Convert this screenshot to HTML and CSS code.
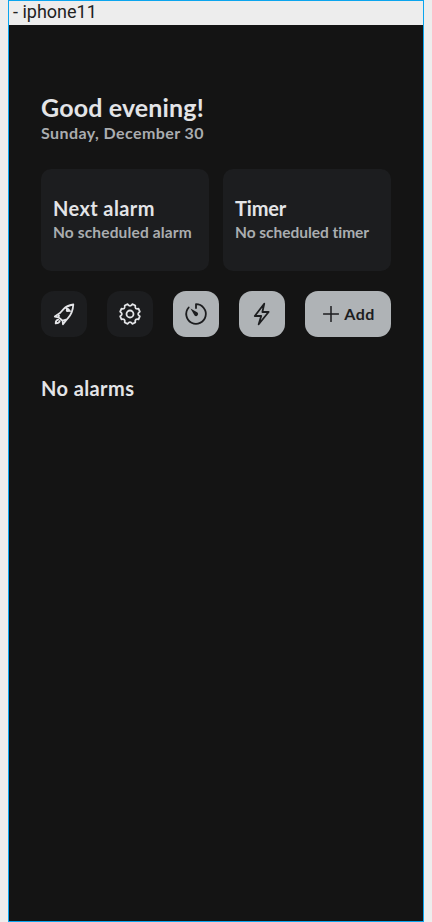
FILE: index.html
```html
<!DOCTYPE html>
<html lang="en">
<head>
<meta charset="utf-8">
<title>Alarms</title>
<link rel="stylesheet" href="styles.css">
</head>
<body>
<div class="frame">
  <div class="frame-label">- iphone11</div>
  <main class="screen">
    <header class="greeting">
      <h1>Good evening!</h1>
      <p>Sunday, December 30</p>
    </header>
    <section class="cards">
      <article class="card"><h2>Next alarm</h2><p>No scheduled alarm</p></article>
      <article class="card timer"><h2>Timer</h2><p>No scheduled timer</p></article>
    </section>
    <nav class="actions">
      <button class="action" aria-label="Launch">
        <svg viewBox="0 0 24 24"><path d="M21.300 2.500C17.500 3.300 14 4.500 12 6.700L8 11 2.800 14.500 6.600 15.400 10.600 18.700 11 22.300 15.800 16.300C19.500 12.500 21 7.500 21.300 2.500ZM7.200 11.600l-.6 3.800M15 17.300l-4.400 1.400M14.500 6l3.500 3.200M6.200 17.700C4.500 18 3.700 19.500 3.700 21.400 5.700 21.400 7.300 20.700 7.800 19"/><circle cx="15.700" cy="8.200" r="1"/></svg>
      </button>
      <button class="action" aria-label="Settings">
        <svg viewBox="0 0 24 24"><path d="M9.700 2.200q2.300 3.400 4.600 0l3 1.300q-.8 4 3.200 3.200l1.300 3q-3.400 2.300 0 4.600l-1.300 3q-4-.8-3.200 3.200l-3 1.300q-2.300-3.400-4.600 0l-3-1.300q.8-4-3.200-3.200l-1.300-3q3.400-2.300 0-4.600l1.300-3q4 .8 3.200-3.200Z"/><circle cx="12" cy="12" r="3.500"/></svg>
      </button>
      <button class="action light" aria-label="Timer">
        <svg viewBox="0 0 24 24"><path d="M12 6V2.200A9.800 9.800 0 1 1 4.700 5.500"/><path class="solid" d="m6.500 6.500 7 4.100a1.900 1.900 0 1 1-2.900 2.800Z"/></svg>
      </button>
      <button class="action light" aria-label="Quick alarm">
        <svg viewBox="0 0 24 24"><path d="M14.200 1.700 4.800 14h6.400L8.700 22.300 18.600 10h-6.200Z"/></svg>
      </button>
      <button class="action light add">
        <svg viewBox="0 0 16 16"><path d="M8 .5v15M.5 8h15"/></svg><span>Add</span>
      </button>
    </nav>
    <h2 class="empty">No alarms</h2>
  </main>
</div>
</body>
</html>
```
FILE: styles.css
```css
* { box-sizing: border-box; }
body { margin: 0; background: #ededed; font-family: Lato, sans-serif; }
h1, h2, p { margin: 0; white-space: nowrap; }
.frame { width: 416px; height: 922px; margin-left: 8px; border: 1px solid #0ba5ee; display: flex; flex-direction: column; }
.frame-label { height: 24px; padding-left: 4px; font: 18px/22px Roboto, sans-serif; color: #222; }
.screen { flex: 1; background: #141414; padding: 67px 32px 0; color: #e3e4e7; }
.greeting { height: 77px; }
h1 { font-size: 25px; line-height: 30px; font-weight: 700; letter-spacing: .15px; }
.greeting p { margin-top: 1px; font-size: 16px; line-height: 20px; font-weight: 700; color: #aaadb0; letter-spacing: .42px; }
.cards { display: grid; grid-template-columns: 168px 168px; gap: 14px; }
.card { height: 102px; border-radius: 10px; background: #1c1d1f; padding: 26px 12px 0; }
h2 { font-size: 20px; line-height: 26px; font-weight: 700; letter-spacing: .4px; }
.card p { margin-top: 1px; font-size: 15.500px; line-height: 20px; font-weight: 700; color: #aaadb0; letter-spacing: .14px; }
.card.timer h2 { letter-spacing: -.15px; }
.card.timer p { letter-spacing: -.03px; }
.actions { display: flex; gap: 20px; margin-top: 20px; }
.action { width: 46px; height: 46px; flex: none; padding: 0; border: 0; border-radius: 13px; background: #1c1d1f; color: #e3e4e7; display: flex; align-items: center; justify-content: center; }
.action svg { width: 24px; height: 24px; fill: none; stroke: currentColor; stroke-width: 1.800; stroke-linecap: round; stroke-linejoin: round; }
.action .solid { fill: currentColor; stroke: none; }
.light { background: #afb3b6; color: #1c1d1f; }
.action.add { width: 86px; gap: 5px; padding-left: 2px; font: 700 16px/20px Lato, sans-serif; letter-spacing: .4px; }
.action.add svg { width: 16px; height: 16px; stroke-width: 1.500; }
.empty { margin-top: 38px; }
```
